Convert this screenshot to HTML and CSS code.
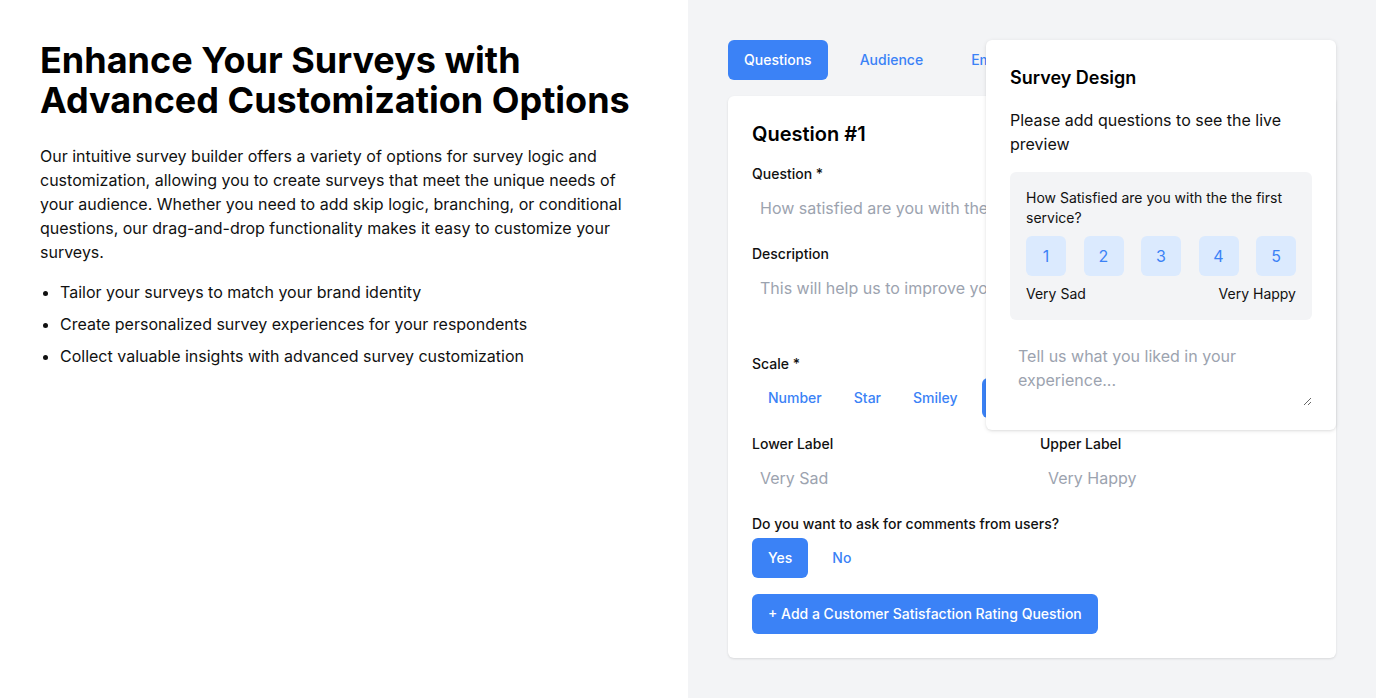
FILE: index.html
```html
<!DOCTYPE html>
<html lang="en">
<head>
<meta charset="utf-8">
<title>Survey Customization</title>
<link rel="stylesheet" href="styles.css">
</head>
<body>
<div class="page">
  <section class="intro">
    <h1 class="intro-title">Enhance Your Surveys with Advanced Customization Options</h1>
    <p class="intro-text">Our intuitive survey builder offers a variety of options for survey logic and customization, allowing you to create surveys that meet the unique needs of your audience. Whether you need to add skip logic, branching, or conditional questions, our drag-and-drop functionality makes it easy to customize your surveys.</p>
    <ul class="intro-list">
      <li>Tailor your surveys to match your brand identity</li>
      <li>Create personalized survey experiences for your respondents</li>
      <li>Collect valuable insights with advanced survey customization</li>
    </ul>
  </section>
  <section class="builder">
    <nav class="tabs">
      <button class="btn btn-active">Questions</button>
      <button class="btn">Audience</button>
      <button class="btn">Embed</button>
    </nav>
    <div class="card">
      <h2 class="card-title">Question #1</h2>
      <div class="field">
        <label class="label">Question *</label>
        <input class="input" placeholder="How satisfied are you with the service?">
      </div>
      <div class="field">
        <label class="label">Description</label>
        <textarea class="input textarea" placeholder="This will help us to improve your experience."></textarea>
      </div>
      <div class="field">
        <label class="label">Scale *</label>
        <div class="btn-row">
          <button class="btn">Number</button>
          <button class="btn">Star</button>
          <button class="btn">Smiley</button>
          <button class="btn btn-active btn-gap">Emoji</button>
        </div>
      </div>
      <div class="field-grid">
        <div class="field">
          <label class="label">Lower Label</label>
          <input class="input" placeholder="Very Sad">
        </div>
        <div class="field">
          <label class="label">Upper Label</label>
          <input class="input" placeholder="Very Happy">
        </div>
      </div>
      <div class="field">
        <label class="label">Do you want to ask for comments from users?</label>
        <div class="btn-row">
          <button class="btn btn-active">Yes</button>
          <button class="btn">No</button>
        </div>
      </div>
      <div class="actions">
        <button class="btn btn-active">+ Add a Customer Satisfaction Rating Question</button>
      </div>
    </div>
    <aside class="preview">
      <h3 class="preview-title">Survey Design</h3>
      <p class="preview-text">Please add questions to see the live preview</p>
      <div class="preview-box">
        <p class="preview-q">How Satisfied are you with the the first service?</p>
        <div class="scale">
          <span class="scale-item">1</span>
          <span class="scale-item">2</span>
          <span class="scale-item">3</span>
          <span class="scale-item">4</span>
          <span class="scale-item">5</span>
        </div>
        <div class="scale-labels">
          <span>Very Sad</span>
          <span>Very Happy</span>
        </div>
      </div>
      <textarea class="input textarea comment" placeholder="Tell us what you liked in your experience..."></textarea>
    </aside>
  </section>
</div>
</body>
</html>
```

FILE: styles.css
```css
* { box-sizing: border-box; }
html, body { margin: 0; padding: 0; }
body {
  font-family: Inter, "Noto Sans", sans-serif;
  color: #111827;
  background: #fff;
}
.page {
  display: grid;
  grid-template-columns: 688px 688px;
  height: 698px;
}
.intro {
  padding: 40px;
  background: #fff;
}
.intro-title {
  margin: 0;
  font-size: 36px;
  line-height: 40px;
  font-weight: 700;
  color: #000;
  letter-spacing: 0;
}
.intro-text {
  margin: 24px 0 16px;
  font-size: 16px;
  line-height: 24px;
  color: #111;
}
.intro-list {
  margin: 0;
  padding-left: 20px;
  font-size: 16px;
  line-height: 24px;
  color: #111;
}
.intro-list li { margin-bottom: 8px; }

.builder {
  position: relative;
  background: #f3f4f6;
  padding: 40px;
}
.tabs {
  display: flex;
  gap: 16px;
  margin-bottom: 16px;
}
.btn {
  font-family: inherit;
  font-size: 14px;
  font-weight: 500;
  line-height: 20px;
  height: 40px;
  padding: 10px 16px;
  border: 0;
  border-radius: 6px;
  background: transparent;
  color: #3b82f6;
  cursor: pointer;
  white-space: nowrap;
}
.btn-active {
  background: #3b82f6;
  color: #fff;
}
.card {
  background: #fff;
  border-radius: 6px;
  box-shadow: 0 1px 3px rgba(0,0,0,0.08), 0 1px 2px rgba(0,0,0,0.04);
  padding: 24px;
  display: flex;
  flex-direction: column;
  gap: 16px;
}
.card-title {
  margin: 0;
  font-size: 20px;
  line-height: 28px;
  font-weight: 600;
  color: #000;
}
.field {
  display: flex;
  flex-direction: column;
  gap: 4px;
}
.label {
  font-size: 14px;
  line-height: 20px;
  font-weight: 500;
  color: #111;
}
.input {
  font-family: inherit;
  font-size: 16px;
  line-height: 24px;
  height: 40px;
  padding: 8px;
  border: 0;
  outline: none;
  background: #fff;
  color: #111;
}
.input::placeholder { color: #9ca3af; }
.textarea {
  height: 70px;
  resize: vertical;
}
.btn-row {
  display: flex;
}
.btn-row .btn-active + .btn { margin-left: 8px; }
.btn-gap { margin-left: 8px; }
.field-grid {
  display: grid;
  grid-template-columns: 1fr 1fr;
  gap: 16px;
}
.actions {
  display: flex;
}

.preview {
  position: absolute;
  top: 40px;
  left: 298px;
  width: 350px;
  background: #fff;
  border-radius: 6px;
  box-shadow: 0 1px 4px rgba(0,0,0,0.1), 0 1px 2px rgba(0,0,0,0.05);
  padding: 24px;
}
.preview-title {
  margin: 0;
  font-size: 18px;
  line-height: 28px;
  font-weight: 600;
  color: #000;
}
.preview-text {
  margin: 16px 0;
  font-size: 16px;
  line-height: 24px;
  color: #111;
}
.preview-box {
  background: #f3f4f6;
  border-radius: 6px;
  padding: 16px;
}
.preview-q {
  margin: 0;
  font-size: 14px;
  line-height: 20px;
  color: #111;
}
.scale {
  display: flex;
  justify-content: space-between;
  margin-top: 8px;
}
.scale-item {
  width: 40px;
  height: 40px;
  border-radius: 6px;
  background: #dbeafe;
  color: #3b82f6;
  font-size: 16px;
  display: flex;
  align-items: center;
  justify-content: center;
}
.scale-labels {
  display: flex;
  justify-content: space-between;
  margin-top: 8px;
  font-size: 14px;
  line-height: 20px;
  color: #111;
}
.comment {
  display: block;
  width: 100%;
  margin-top: 16px;
}
```
